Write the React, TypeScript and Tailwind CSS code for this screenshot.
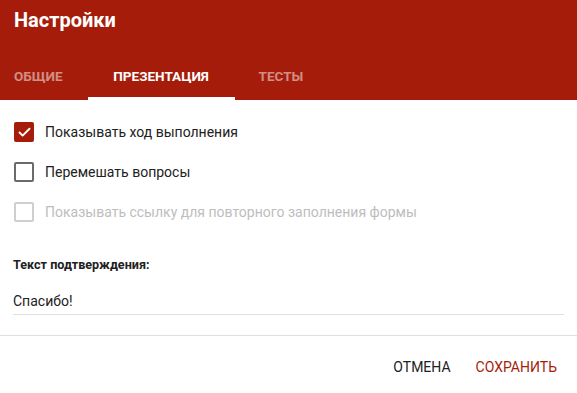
import { Check } from 'lucide-react';

const options = [
  { label: 'Показывать ход выполнения', checked: true, disabled: false },
  { label: 'Перемешать вопросы', checked: false, disabled: false },
  { label: 'Показывать ссылку для повторного заполнения формы', checked: false, disabled: true },
];

export default function App() {
  return (
    <div className="w-[577px] h-[393px] bg-white flex flex-col" style={{ fontFamily: 'Roboto, "Noto Sans", sans-serif' }}>
      <div className="h-[100px] bg-[#a51d0a] flex flex-col">
        <div className="h-[40px] px-[14px] flex items-center text-white text-[20px] font-bold">Настройки</div>
        <div className="flex-1 flex items-end pl-[14px]">
          <div className="text-[13.5px] font-bold uppercase text-white/50 h-[48px] flex items-center">Общие</div>
          <div className="ml-[25px] w-[147px] h-[48px] flex items-center justify-center text-[13.5px] font-bold uppercase text-white border-b-[3px] border-white pt-[3px]">
            Презентация
          </div>
          <div className="ml-[24px] text-[13.5px] font-bold uppercase text-white/50 h-[48px] flex items-center">Тесты</div>
        </div>
      </div>

      <div className="pt-[12px] px-[14px]">
        {options.map((o) => (
          <div key={o.label} className="h-10 flex items-center gap-[11px]">
            <div
              className={
                o.checked
                  ? 'w-5 h-5 rounded-[2px] bg-[#a51d0a] flex items-center justify-center'
                  : o.disabled
                  ? 'w-5 h-5 rounded-[2px] border-2 border-[#cfcfcf]'
                  : 'w-5 h-5 rounded-[2px] border-2 border-[#6b6b6b]'
              }
            >
              {o.checked && <Check size={15} strokeWidth={3} color="white" />}
            </div>
            <span className={o.disabled ? 'text-[14px] text-[#bdbdbd]' : 'text-[14px] text-[#212121]'}>{o.label}</span>
          </div>
        ))}
      </div>

      <div className="px-[13px] mt-[24px]">
        <div className="text-[12.6px] font-bold text-[#212121] h-[18px] flex items-center">Текст подтверждения:</div>
        <div className="mt-[4px] border-b border-[#e0e0e0] h-[37px] flex items-end text-[14px] leading-[20px] text-[#212121] pb-[3px]">Спасибо!</div>
      </div>

      <div className="mt-[20px] border-t border-[#e0e0e0] flex-1 flex items-center justify-end pr-[20px] gap-[25px] pt-[6px]">
        <button className="text-[14px] uppercase text-[#212121]">Отмена</button>
        <button className="text-[14px] uppercase text-[#a51d0a]">Сохранить</button>
      </div>
    </div>
  );
}
